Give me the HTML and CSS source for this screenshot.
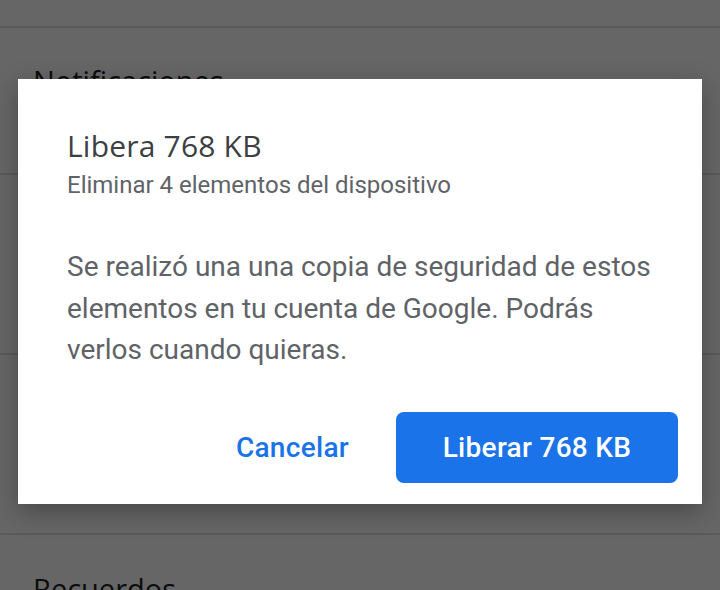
FILE: index.html
```html
<!DOCTYPE html>
<html lang="es">
<head>
<meta charset="utf-8">
<link rel="stylesheet" href="styles.css">
</head>
<body>
<div class="page">
  <div class="row row-top"></div>
  <div class="row row-a"><div class="row-title">Notificaciones</div></div>
  <div class="row row-b"></div>
  <div class="row row-c"></div>
  <div class="row row-d"><div class="row-title">Recuerdos</div></div>
</div>
<div class="scrim"></div>
<div class="dialog">
  <div class="title">Libera 768 KB</div>
  <div class="subtitle">Eliminar 4 elementos del dispositivo</div>
  <p class="body">Se realizó una una copia de seguridad de estos elementos en tu cuenta de Google. Podrás verlos cuando quieras.</p>
  <div class="actions">
    <button class="btn-text">Cancelar</button>
    <button class="btn-primary">Liberar 768 KB</button>
  </div>
</div>
</body>
</html>
```
FILE: styles.css
```css
html, body {
  margin: 0;
  padding: 0;
  width: 720px;
  height: 590px;
  overflow: hidden;
  background: #ffffff;
  font-family: Roboto, "Noto Sans", sans-serif;
}
.page {
  display: flex;
  flex-direction: column;
}
.row {
  border-bottom: 2px solid #e2e2e2;
  box-sizing: border-box;
  padding-left: 33px;
}
.row-top { height: 28px; }
.row-a { height: 147px; padding-top: 33px; }
.row-b { height: 180px; }
.row-c { height: 180px; }
.row-d { height: 80px; border-bottom: none; padding-top: 34px; }
.row-title {
  font-family: "Open Sans", Roboto, sans-serif;
  font-size: 29px;
  color: #202124;
  line-height: 40px;
}
.scrim {
  position: absolute;
  inset: 0;
  background: rgba(0, 0, 0, 0.6);
}
.dialog {
  position: absolute;
  left: 18px;
  top: 79px;
  width: 684px;
  height: 425px;
  box-sizing: border-box;
  background: #ffffff;
  padding: 48px 24px 0 49px;
  box-shadow: 0 8px 24px rgba(0, 0, 0, 0.3);
}
.title {
  font-family: "Open Sans", Roboto, sans-serif;
  font-size: 30px;
  line-height: 38px;
  letter-spacing: 0.2px;
  color: #3c4043;
}
.subtitle {
  font-size: 24px;
  line-height: 28px;
  color: #5f6368;
  margin-top: 6px;
}
.body {
  margin: 47px 0 0;
  max-width: 590px;
  font-size: 28px;
  line-height: 41.5px;
  color: #5f6368;
}
.actions {
  display: flex;
  justify-content: flex-end;
  align-items: center;
  gap: 47px;
  margin-top: 41px;
}
.btn-text {
  background: none;
  border: none;
  padding: 0;
  font-family: Roboto, sans-serif;
  font-size: 28px;
  font-weight: 500;
  letter-spacing: 0.3px;
  color: #1a73e8;
}
.btn-primary {
  width: 282px;
  height: 71px;
  border: none;
  border-radius: 8px;
  background: #1a73e8;
  color: #ffffff;
  font-family: Roboto, sans-serif;
  font-size: 28px;
  font-weight: 500;
  letter-spacing: 0.3px;
}
```
